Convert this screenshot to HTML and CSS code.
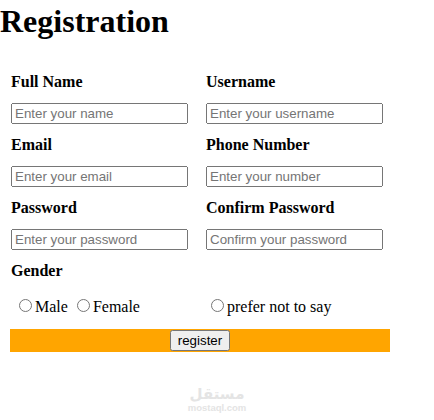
FILE: index.html
```
<!DOCTYPE html>
<html lang="en">
<head>
  <meta charset="UTF-8">
  <meta name="viewport" content="width=device-width, initial-scale=1.0">
  <title>Registration</title>
  <link rel="stylesheet" href="styles.css">
</head>
<body>
  <h1 class="title">Registration</h1>
  <form class="form">
    <div class="fields">
      <div class="field">
        <label class="label" for="name">Full Name</label>
        <input class="input" type="text" id="name" placeholder="Enter your name">
      </div>
      <div class="field">
        <label class="label" for="username">Username</label>
        <input class="input" type="text" id="username" placeholder="Enter your username">
      </div>
      <div class="field">
        <label class="label" for="email">Email</label>
        <input class="input" type="text" id="email" placeholder="Enter your email">
      </div>
      <div class="field">
        <label class="label" for="phone">Phone Number</label>
        <input class="input" type="text" id="phone" placeholder="Enter your number">
      </div>
      <div class="field">
        <label class="label" for="password">Password</label>
        <input class="input" type="password" id="password" placeholder="Enter your password">
      </div>
      <div class="field">
        <label class="label" for="confirm">Confirm Password</label>
        <input class="input" type="password" id="confirm" placeholder="Confirm your password">
      </div>
    </div>
    <div class="gender">
      <div class="label">Gender</div>
      <div class="fields">
        <div class="choices first">
          <input type="radio" name="gender" id="male"><label for="male">Male</label>
          <input type="radio" name="gender" id="female"><label for="female">Female</label>
        </div>
        <div class="choices">
          <input type="radio" name="gender" id="none"><label for="none">prefer not to say</label>
        </div>
      </div>
    </div>
    <div class="submit-bar">
      <button type="submit" class="submit">register</button>
    </div>
  </form>
  <div class="watermark">
    <span class="watermark-ar">مستقل</span>
    <span class="watermark-en">mostaql.com</span>
  </div>
</body>
</html>
```
FILE: styles.css
```
body {
  margin: 0;
  font-family: 'Liberation Serif', 'Times New Roman', serif;
  font-size: 16px;
  background: #fff;
  color: #000;
}
.title {
  margin: 3px 0 0;
  font-size: 32px;
  line-height: 37px;
}
.form {
  width: 380px;
  margin: 33px 0 0 10px;
}
.fields {
  display: grid;
  grid-template-columns: 195px 1fr;
  padding-left: 1px;
}
.field {
  display: flex;
  flex-direction: column;
  align-items: flex-start;
  padding-bottom: 12px;
}
.label {
  display: block;
  font-weight: bold;
  line-height: 18px;
  margin-bottom: 12px;
}
.input {
  width: 177px;
  height: 21px;
  box-sizing: border-box;
  font-family: 'Liberation Sans', Arial, sans-serif;
  font-size: 13.33px;
  padding: 1px 2px;
}
.gender .label {
  padding-left: 1px;
  margin-bottom: 16px;
}
.choices {
  line-height: 18px;
}
.choices.first {
  padding-left: 3px;
}
.submit-bar {
  display: flex;
  justify-content: center;
  background: #ffa500;
  padding: 1px 0;
  margin-top: 13px;
}
.submit {
  font-family: 'Liberation Sans', Arial, sans-serif;
  font-size: 13.33px;
  height: 21px;
}
.watermark {
  position: absolute;
  left: 187px;
  top: 386px;
  width: 60px;
  display: flex;
  flex-direction: column;
  align-items: center;
  color: #e4e4e4;
  pointer-events: none;
}
.watermark-ar {
  font-family: 'DejaVu Sans', sans-serif;
  font-weight: bold;
  font-size: 15px;
  line-height: 17px;
}
.watermark-en {
  font-family: 'Liberation Sans', Arial, sans-serif;
  font-weight: bold;
  font-size: 9.5px;
  line-height: 10px;
}
```
